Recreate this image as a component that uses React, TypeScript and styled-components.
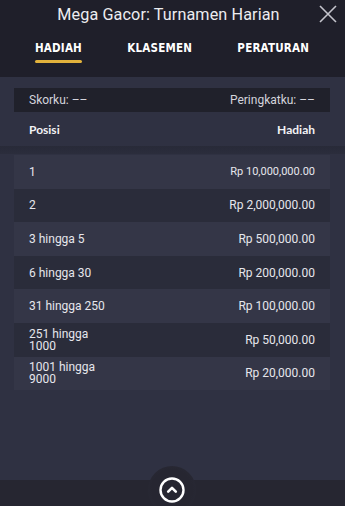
import styled, { createGlobalStyle } from 'styled-components';

const GlobalStyle = createGlobalStyle`
  html, body {
    margin: 0;
    padding: 0;
    background: #2f3142;
  }
  * {
    box-sizing: border-box;
  }
`;

const prizes = [
  { rank: '1', amount: 'Rp 10,000,000.00', small: true },
  { rank: '2', amount: 'Rp 2,000,000.00' },
  { rank: '3 hingga 5', amount: 'Rp 500,000.00' },
  { rank: '6 hingga 30', amount: 'Rp 200,000.00' },
  { rank: '31 hingga 250', amount: 'Rp 100,000.00' },
  { rank: '251 hingga 1000', amount: 'Rp 50,000.00' },
  { rank: '1001 hingga 9000', amount: 'Rp 20,000.00' },
];

const tabs = ['HADIAH', 'KLASEMEN', 'PERATURAN'];

const App = () => {
  return (
    <>
      <GlobalStyle />
      <Page>
        <Header>
          <TitleRow>
            <Title>Mega Gacor: Turnamen Harian</Title>
            <CloseButton aria-label="Tutup">
              <svg width="18" height="18" viewBox="0 0 18 18">
                <path
                  d="M1 1 L17 17 M17 1 L1 17"
                  stroke="#c4c4cc"
                  strokeWidth="1.6"
                  fill="none"
                />
              </svg>
            </CloseButton>
          </TitleRow>
          <Tabs>
            {tabs.map((t, i) => (
              <Tab key={t} $active={i === 0}>
                {t}
              </Tab>
            ))}
          </Tabs>
        </Header>

        <Body>
          <ScoreBar>
            <span>Skorku: ––</span>
            <span>Peringkatku: ––</span>
          </ScoreBar>
          <TableHead>
            <span>Posisi</span>
            <span>Hadiah</span>
          </TableHead>
        </Body>
        <Shadow />

        <List>
          {prizes.map((p, i) => (
            <Row key={p.rank} $odd={i % 2 === 0}>
              <Rank>{p.rank}</Rank>
              <Amount $small={p.small}>{p.amount}</Amount>
            </Row>
          ))}
        </List>

        <Spacer />

        <Footer>
          <Bump>
            <svg width="26" height="26" viewBox="0 0 26 26">
              <circle
                cx="13"
                cy="13"
                r="11.5"
                stroke="#ffffff"
                strokeWidth="2.4"
                fill="none"
              />
              <path
                d="M9.2 14.6 L13 10.8 L16.8 14.6"
                stroke="#ffffff"
                strokeWidth="2.6"
                strokeLinecap="round"
                strokeLinejoin="round"
                fill="none"
              />
            </svg>
          </Bump>
        </Footer>
      </Page>
    </>
  );
};

const Page = styled.div`
  width: 345px;
  height: 506px;
  background: #2f3142;
  display: flex;
  flex-direction: column;
  overflow: hidden;
  font-family: Roboto, 'Liberation Sans', sans-serif;
`;

const Header = styled.div`
  background: #1f1f2a;
  height: 77px;
  display: flex;
  flex-direction: column;
`;

const TitleRow = styled.div`
  position: relative;
  height: 28px;
  display: flex;
  align-items: center;
  justify-content: center;
  padding-right: 8px;
`;

const Title = styled.div`
  color: #ececf0;
  font-size: 16.2px;
  letter-spacing: 0.1px;
`;

const CloseButton = styled.div`
  position: absolute;
  right: 8px;
  top: 5px;
  width: 18px;
  height: 18px;
  display: flex;
`;

const Tabs = styled.div`
  display: flex;
  justify-content: space-between;
  padding: 13px 36px 0 35px;
`;

const Tab = styled.div<{ $active?: boolean }>`
  position: relative;
  color: #ffffff;
  font-family: 'DejaVu Sans', sans-serif;
  font-stretch: condensed;
  font-weight: 800;
  font-size: 11.5px;
  letter-spacing: 0.2px;
  line-height: 14px;
  padding-bottom: 8px;

  &::after {
    content: '';
    display: ${(p) => (p.$active ? 'block' : 'none')};
    position: absolute;
    left: 0;
    right: 0;
    bottom: 0;
    height: 3px;
    border-radius: 2px;
    background: #e2b23c;
  }
`;

const Body = styled.div`
  padding: 11px 15px 0 14px;
`;

const ScoreBar = styled.div`
  height: 24px;
  background: #20212b;
  display: flex;
  align-items: center;
  justify-content: space-between;
  padding: 0 15px;
  color: #d4d4dc;
  font-size: 12px;
`;

const TableHead = styled.div`
  height: 34px;
  display: flex;
  align-items: center;
  justify-content: space-between;
  padding: 0 15px;
  color: #f2f2f5;
  font-family: Lato, 'Open Sans', sans-serif;
  font-weight: 700;
  font-size: 12px;
`;

const Shadow = styled.div`
  height: 8px;
  background: linear-gradient(#282a38, #2b2d3c);
`;

const List = styled.div`
  margin: 1px 15px 0 14px;
  background: #2a2c3a;
`;

const Row = styled.div<{ $odd?: boolean }>`
  height: 33.6px;
  display: flex;
  align-items: center;
  justify-content: space-between;
  padding: 0 15px;
  background: ${(p) => (p.$odd ? '#343647' : '#2a2c3a')};
  color: #e6e6ec;
`;

const Rank = styled.div`
  max-width: 82px;
  font-size: 12px;
  line-height: 12px;
`;

const Amount = styled.div<{ $small?: boolean }>`
  font-size: ${(p) => (p.$small ? '11px' : '12px')};
`;

const Spacer = styled.div`
  flex: 1;
`;

const Footer = styled.div`
  position: relative;
  height: 26px;
  background: #262631;
  display: flex;
  justify-content: center;
`;

const Bump = styled.div`
  position: absolute;
  top: -14px;
  left: 148px;
  width: 48px;
  height: 48px;
  border-radius: 50%;
  background: radial-gradient(circle, #262631 60%, #2a2b38 100%);
  display: flex;
  align-items: center;
  justify-content: center;
`;

export default App;
